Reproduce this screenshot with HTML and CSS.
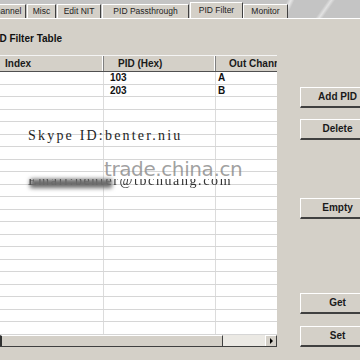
FILE: index.html
```html
<!DOCTYPE html>
<html>
<head>
<meta charset="utf-8">
<link rel="stylesheet" href="styles.css">
</head>
<body>
<div class="screen">
  <div class="tabs">
    <div class="tab tab-first">Channel</div>
    <div class="tab w-misc">Misc</div>
    <div class="tab w-nit">Edit NIT</div>
    <div class="tab w-pass">PID Passthrough</div>
    <div class="tab tab-active w-filter">PID Filter</div>
    <div class="tab w-mon">Monitor</div>
  </div>
  <div class="main">
    <div class="left">
      <div class="title"><span class="title-text">PID Filter Table</span></div>
      <div class="grid">
        <div class="row head">
          <div class="cell c1 hidx">Index</div>
          <div class="cell c2 hpad">PID (Hex)</div>
          <div class="cell c3 hpad">Out Channel</div>
        </div>
        <div class="rows">
          <div class="row"><div class="cell c1"></div><div class="cell c2">103</div><div class="cell c3">A</div></div>
          <div class="row"><div class="cell c1"></div><div class="cell c2">203</div><div class="cell c3">B</div></div>
          <div class="row"><div class="cell c1"></div><div class="cell c2"></div><div class="cell c3"></div></div>
          <div class="row"><div class="cell c1"></div><div class="cell c2"></div><div class="cell c3"></div></div>
          <div class="row"><div class="cell c1"></div><div class="cell c2"></div><div class="cell c3"></div></div>
          <div class="row"><div class="cell c1"></div><div class="cell c2"></div><div class="cell c3"></div></div>
          <div class="row"><div class="cell c1"></div><div class="cell c2"></div><div class="cell c3"></div></div>
          <div class="row"><div class="cell c1"></div><div class="cell c2"></div><div class="cell c3"></div></div>
          <div class="row"><div class="cell c1"></div><div class="cell c2"></div><div class="cell c3"></div></div>
          <div class="row"><div class="cell c1"></div><div class="cell c2"></div><div class="cell c3"></div></div>
          <div class="row"><div class="cell c1"></div><div class="cell c2"></div><div class="cell c3"></div></div>
          <div class="row"><div class="cell c1"></div><div class="cell c2"></div><div class="cell c3"></div></div>
          <div class="row"><div class="cell c1"></div><div class="cell c2"></div><div class="cell c3"></div></div>
          <div class="row"><div class="cell c1"></div><div class="cell c2"></div><div class="cell c3"></div></div>
          <div class="row"><div class="cell c1"></div><div class="cell c2"></div><div class="cell c3"></div></div>
          <div class="row"><div class="cell c1"></div><div class="cell c2"></div><div class="cell c3"></div></div>
          <div class="row"><div class="cell c1"></div><div class="cell c2"></div><div class="cell c3"></div></div>
          <div class="row"><div class="cell c1"></div><div class="cell c2"></div><div class="cell c3"></div></div>
          <div class="row"><div class="cell c1"></div><div class="cell c2"></div><div class="cell c3"></div></div>
          <div class="row"><div class="cell c1"></div><div class="cell c2"></div><div class="cell c3"></div></div>
          <div class="row"><div class="cell c1"></div><div class="cell c2"></div><div class="cell c3"></div></div>
          <div class="row"><div class="cell c1"></div><div class="cell c2"></div><div class="cell c3"></div></div>
        </div>
        <div class="hscroll">
          <div class="thumb"></div>
          <div class="track"></div>
          <div class="arrow"><svg width="5" height="6" viewBox="0 0 5 6"><path d="M1 0 L4 3 L1 6 Z" fill="#000"/></svg></div>
        </div>
      </div>
    </div>
    <div class="right">
      <div class="btn b1">Add PID</div>
      <div class="btn b2">Delete</div>
      <div class="btn b3">Empty</div>
      <div class="btn b4">Get</div>
      <div class="btn b5">Set</div>
    </div>
  </div>
  <div class="wm-skype">Skype ID:benter.niu</div>
  <div class="wm-email"><span>Email:benter@tbchuang.com</span></div>
  <div class="wm-blur"></div>
  <div class="wm-trade">trade.china.cn</div>
</div>
</body>
</html>
```
FILE: styles.css
```css
html, body {
  margin: 0;
  padding: 0;
}
body {
  width: 360px;
  height: 360px;
  overflow: hidden;
  background: #d4d0c8;
  font-family: "Liberation Sans", Arial, sans-serif;
  color: #111;
}
.screen {
  position: relative;
  width: 360px;
  height: 360px;
  overflow: hidden;
  display: flex;
  flex-direction: column;
}
.tabs {
  height: 18px;
  flex: 0 0 18px;
  display: flex;
  align-items: flex-end;
  background:
    linear-gradient(115deg, transparent 78%, rgba(255,255,255,0.6) 79%, transparent 80%),
    linear-gradient(125deg, transparent 88%, rgba(255,255,255,0.5) 89%, transparent 90%),
    #c4c4c4;
  border-bottom: 1px solid #ffffff;
  box-sizing: content-box;
  overflow: hidden;
}
.tab {
  box-sizing: border-box;
  height: 14px;
  background: #d4d0c8;
  border-top: 1px solid #ffffff;
  border-left: 1px solid #ffffff;
  border-right: 1px solid #404040;
  font-size: 8.5px;
  line-height: 12px;
  text-align: center;
  color: #222;
  margin-right: 1px;
  white-space: nowrap;
  flex: 0 0 auto;
}
.tab-first { margin-left: -15px; width: 41px; }
.w-misc { width: 29px; }
.w-nit { width: 44px; }
.w-pass { width: 87px; }
.w-filter { width: 53px; height: 16px; line-height: 14px; margin-right: 0; }
.w-mon { width: 45px; }
.main {
  flex: 1;
  display: flex;
  min-height: 0;
}
.left {
  width: 277px;
  flex: 0 0 277px;
  display: flex;
  flex-direction: column;
}
.title {
  height: 36px;
  flex: 0 0 36px;
  overflow: hidden;
  white-space: nowrap;
}
.title-text {
  display: block;
  margin-left: -10px;
  margin-top: 14px;
  font-size: 10px;
  font-weight: bold;
  line-height: 12px;
}
.grid {
  display: flex;
  flex-direction: column;
  height: 292px;
  background: #ffffff;
  overflow: hidden;
}
.row {
  display: flex;
  height: 12.5px;
  box-sizing: border-box;
  border-bottom: 1px solid #d6d6d6;
  flex: 0 0 auto;
}
.cell {
  box-sizing: border-box;
  font-size: 10px;
  font-weight: bold;
  line-height: 11px;
  white-space: nowrap;
  overflow: hidden;
  border-right: 1px solid #dcdcdc;
  padding-left: 5px;
}
.c1 { width: 104px; flex: 0 0 104px; }
.c2 { width: 112px; flex: 0 0 112px; }
.c3 { width: 90px; flex: 0 0 90px; border-right: none; padding-left: 2px; }
.row .c2 { padding-left: 6px; }
.head {
  height: 17px;
  background: #d4d0c8;
  border-top: 1px solid #f4f4f4;
  border-bottom: 1px solid #505050;
}
.head .cell {
  line-height: 15px;
  border-right: 1px solid #808080;
  box-shadow: inset -1px 0 0 #ffffff;
  color: #1a1a1a;
}
.head .hidx { padding-left: 5px; }
.head .hpad { padding-left: 14px; }
.head .c3 { padding-left: 13px; }
.rows {
  flex: 1;
  overflow: hidden;
  min-height: 0;
}
.hscroll {
  height: 11px;
  flex: 0 0 11px;
  display: flex;
  border-bottom: 1px solid #404040;
  background: #d4d0c8;
}
.thumb {
  width: 223px;
  box-sizing: border-box;
  background: #d4d0c8;
  border-left: 2px solid #303030;
  border-top: 1px solid #ffffff;
  border-right: 1px solid #404040;
}
.track {
  flex: 1;
  background: #ebe9e4;
}
.arrow {
  width: 12px;
  box-sizing: border-box;
  background: #d4d0c8;
  border-top: 1px solid #ffffff;
  border-left: 1px solid #ffffff;
  border-right: 1px solid #404040;
  display: flex;
  align-items: center;
  justify-content: center;
}
.right {
  flex: 1;
  display: flex;
  flex-direction: column;
  padding-left: 23px;
}
.btn {
  box-sizing: border-box;
  width: 76px;
  height: 21px;
  background: #d4d0c8;
  border-top: 1px solid #ffffff;
  border-left: 1px solid #ffffff;
  border-bottom: 2px solid #404040;
  border-right: 2px solid #404040;
  font-size: 10px;
  font-weight: bold;
  line-height: 18px;
  text-align: center;
  color: #1a1a1a;
}
.b1 { margin-top: 68px; }
.b2 { margin-top: 11px; }
.b3 { margin-top: 58px; }
.b4 { margin-top: 74px; }
.b5 { margin-top: 12px; }
.wm-skype {
  position: absolute;
  left: 28px;
  top: 128px;
  font-family: "Liberation Serif", "Times New Roman", serif;
  font-size: 14px;
  line-height: 16px;
  letter-spacing: 2.2px;
  color: #1e1e1e;
  white-space: nowrap;
}
.wm-email {
  position: absolute;
  left: 28px;
  top: 179px;
  height: 9px;
  overflow: hidden;
  font-family: "Liberation Serif", "Times New Roman", serif;
  font-size: 14px;
  letter-spacing: 1.6px;
  color: #333;
  white-space: nowrap;
}
.wm-email span {
  display: block;
  margin-top: -6px;
  line-height: 16px;
  filter: blur(0.4px);
}
.wm-blur {
  position: absolute;
  left: 30px;
  top: 179px;
  width: 82px;
  height: 9px;
  background: #6a6a6a;
  filter: blur(2px);
}
.wm-trade {
  position: absolute;
  left: 104px;
  top: 157px;
  font-family: "DejaVu Sans", sans-serif;
  font-size: 20px;
  line-height: 24px;
  letter-spacing: -0.4px;
  color: rgba(130,130,130,0.75);
  white-space: nowrap;
}
```
